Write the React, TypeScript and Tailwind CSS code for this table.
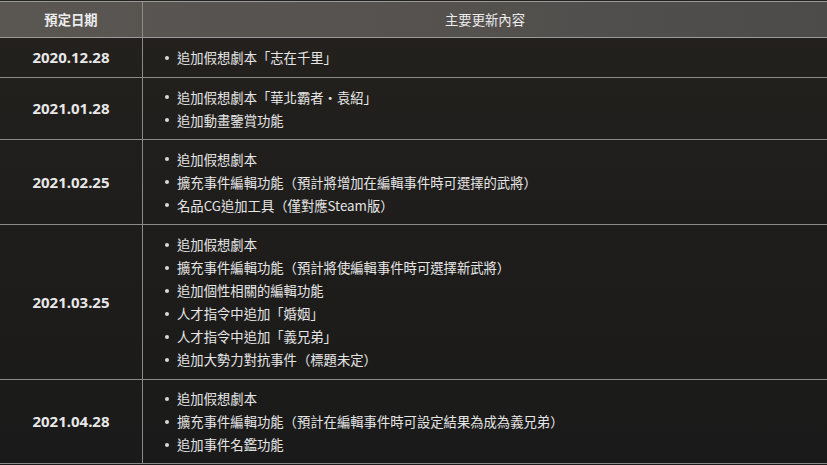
import React from "react";

const rows: { date: string; h: string; items: string[] }[] = [
  { date: "2020.12.28", h: "h-[40px]", items: ["追加假想劇本「志在千里」"] },
  { date: "2021.01.28", h: "h-[62px]", items: ["追加假想劇本「華北霸者・袁紹」", "追加動畫鑒賞功能"] },
  {
    date: "2021.02.25",
    h: "h-[85px]",
    items: ["追加假想劇本", "擴充事件編輯功能（預計將增加在編輯事件時可選擇的武將）", "名品CG追加工具（僅對應Steam版）"],
  },
  {
    date: "2021.03.25",
    h: "h-[155px]",
    items: [
      "追加假想劇本",
      "擴充事件編輯功能（預計將使編輯事件時可選擇新武將）",
      "追加個性相關的編輯功能",
      "人才指令中追加「婚姻」",
      "人才指令中追加「義兄弟」",
      "追加大勢力對抗事件（標題未定）",
    ],
  },
  {
    date: "2021.04.28",
    h: "h-[84px]",
    items: ["追加假想劇本", "擴充事件編輯功能（預計在編輯事件時可設定結果為成為義兄弟）", "追加事件名鑑功能"],
  },
];

export default function App() {
  return (
    <div
      className="w-[827px] h-[465px] overflow-hidden bg-gradient-to-b from-[#24211e] via-[#1e1d1b] to-[#1a1a1a] pt-px text-[#e6e6e6]"
      style={{ fontFamily: '"Noto Sans CJK TC", "Noto Sans", sans-serif' }}
    >
      <div className="border-t border-[#9a9a9a]">
        <div className="grid grid-cols-[143px_1fr] h-[36px] bg-gradient-to-r from-[#5a5652] via-[#55524f] to-[#4c4b4a] border-b border-[#9a9a9a]">
          <div className="flex items-center justify-center border-r border-[#8a8a8a] text-[13.33px] font-bold text-[#ececec]">
            預定日期
          </div>
          <div className="flex items-center justify-center text-[13.33px] text-[#ececec]">主要更新內容</div>
        </div>
        {rows.map((r) => (
          <div key={r.date} className={`grid grid-cols-[143px_1fr] border-b border-[#8a8a8a] ${r.h}`}>
            <div
              className="flex items-center justify-center border-r border-[#8a8a8a] text-[15px] font-bold text-[#e8e8e8]"
              style={{ fontFamily: '"Noto Sans", sans-serif' }}
            >
              {r.date}
            </div>
            <ul className="flex flex-col justify-center">
              {r.items.map((it) => (
                <li key={it} className="flex items-center h-[23px] text-[13.33px] leading-[23px]">
                  <span className="ml-[22px] mr-[8px] w-[4px] h-[4px] rounded-full bg-[#d8d8d8] shrink-0" />
                  <span>{it}</span>
                </li>
              ))}
            </ul>
          </div>
        ))}
      </div>
    </div>
  );
}
